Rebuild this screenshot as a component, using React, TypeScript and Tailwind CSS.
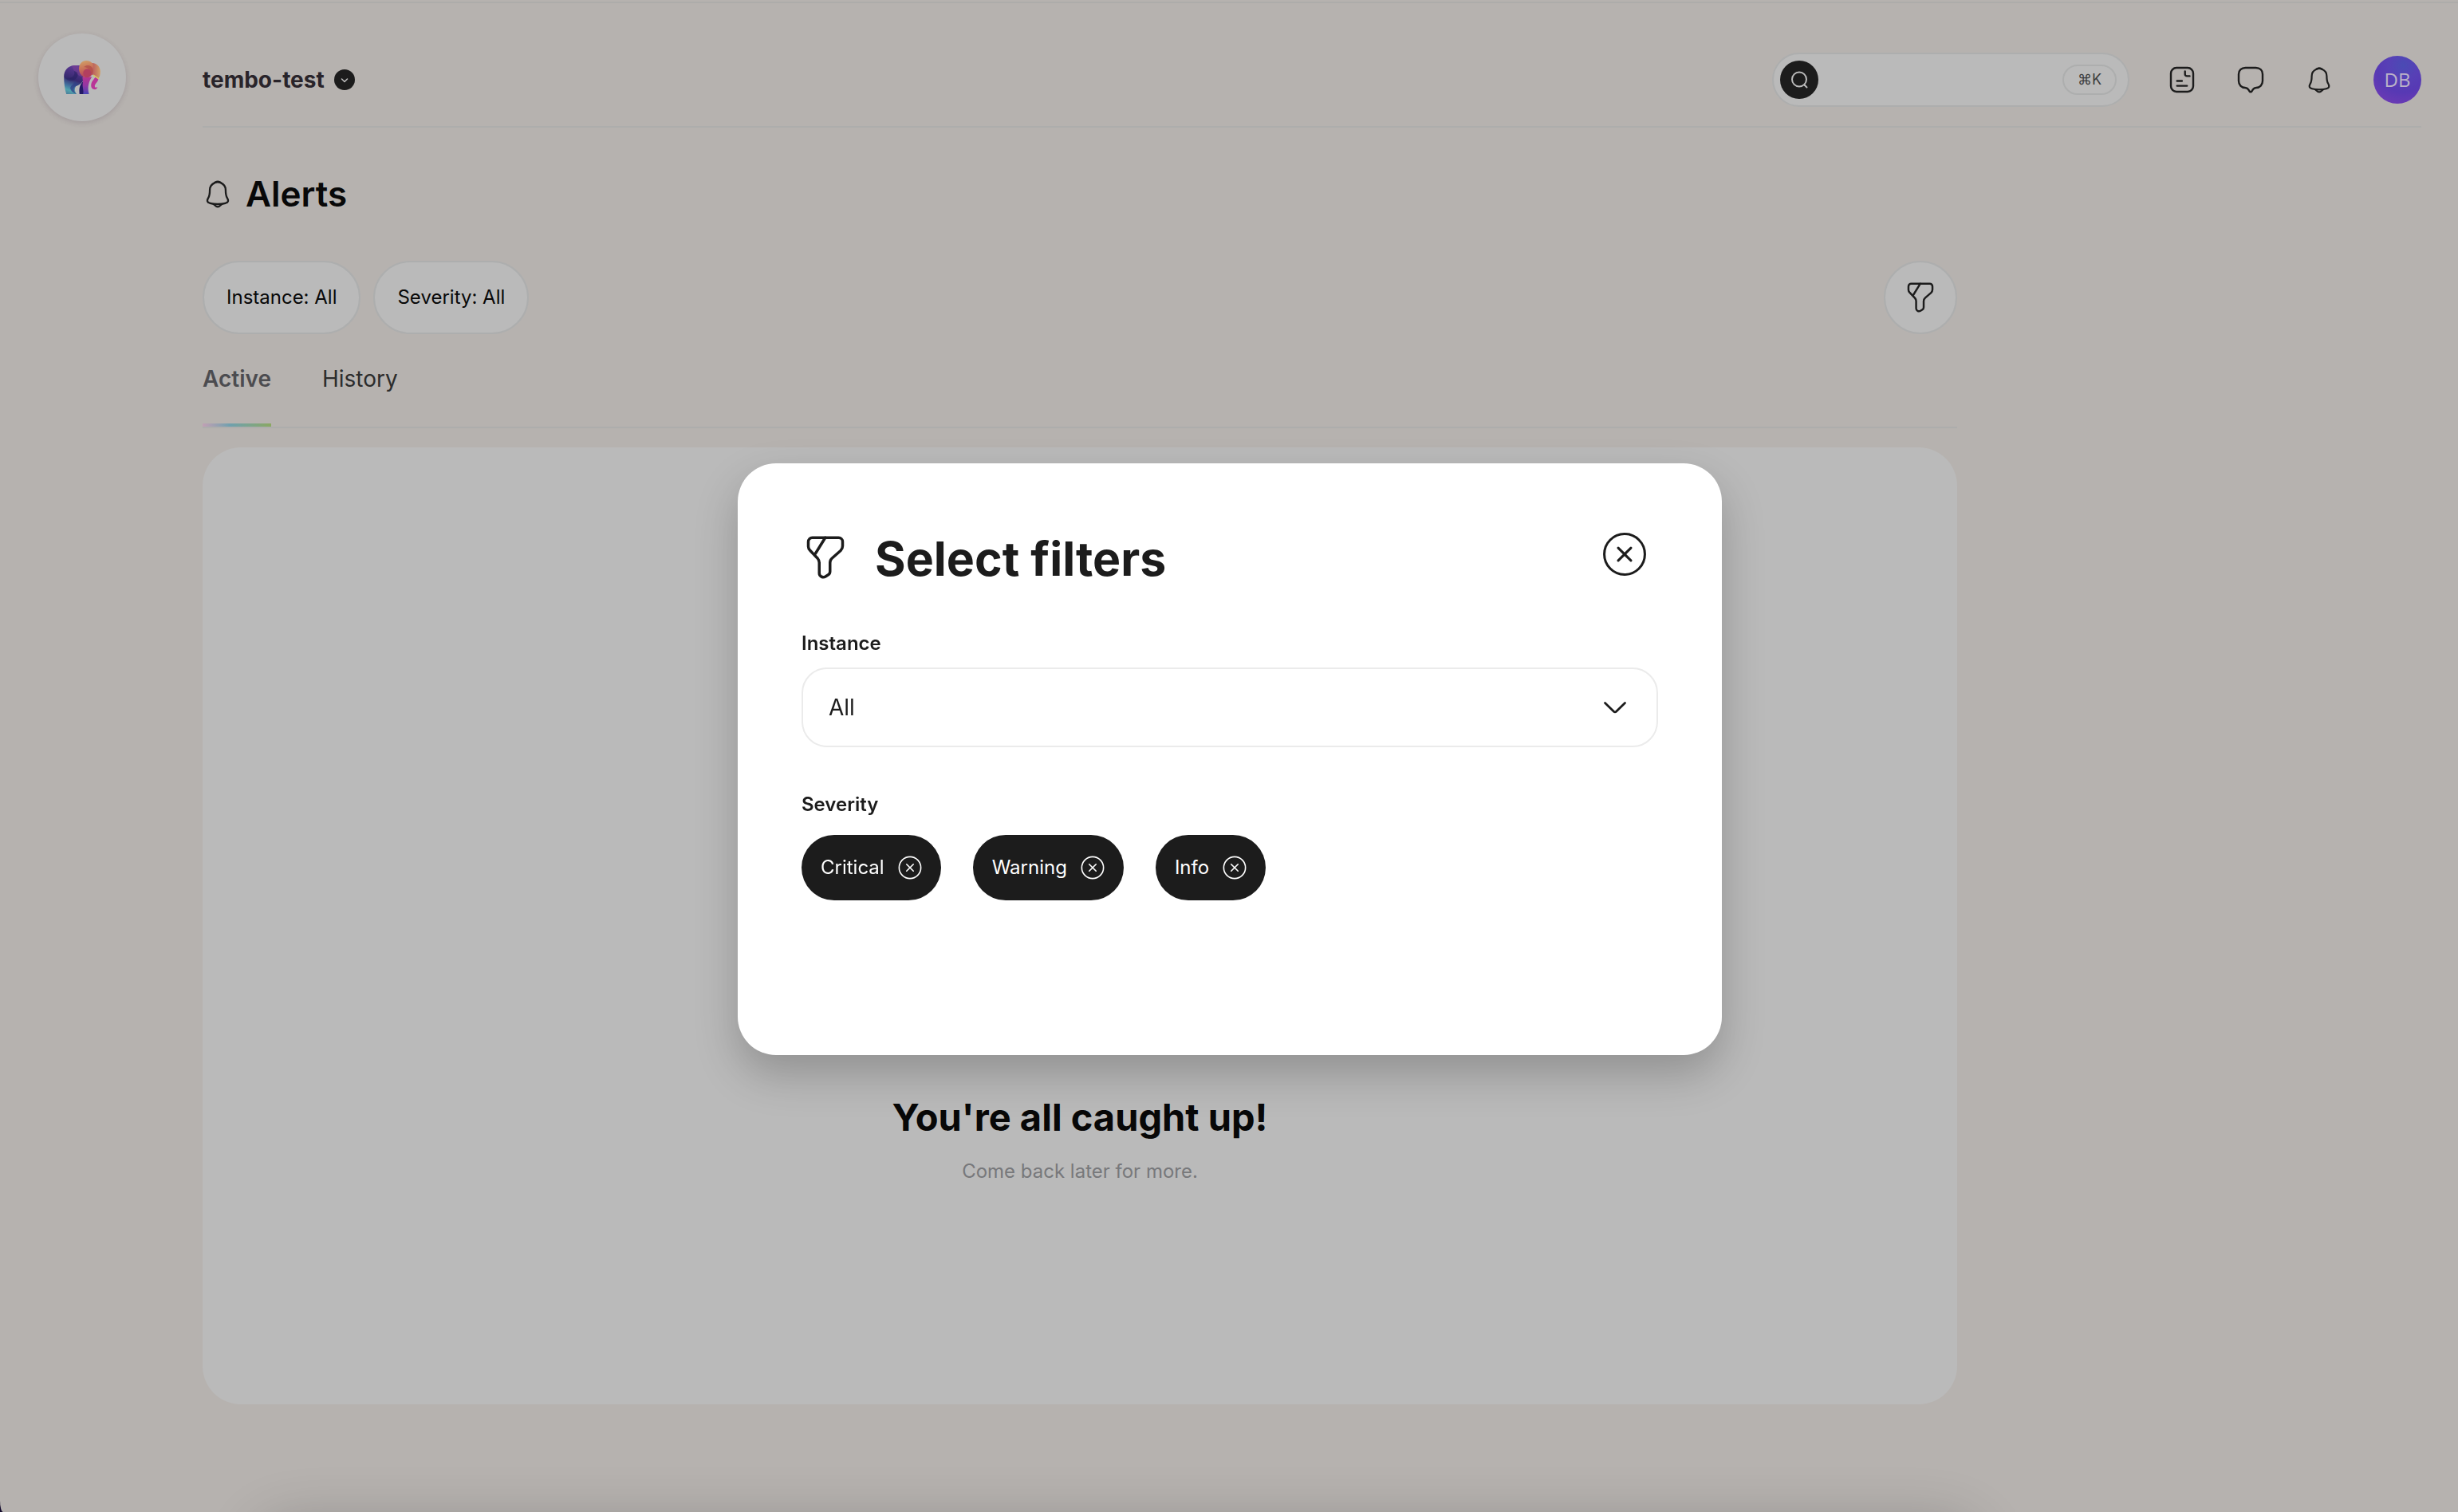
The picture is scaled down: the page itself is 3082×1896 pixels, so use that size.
import React from "react";

type IconProps = { className?: string };

function BellIcon({ className }: IconProps) {
  return (
    <svg viewBox="0 0 32 36" fill="none" stroke="currentColor" strokeWidth="2.2" strokeLinejoin="round" strokeLinecap="round" className={className} aria-hidden="true">
      <path d="M16 3.4c1.6 0 2.4.8 3.4 1.4 3.400 1.500 6 4.600 6 8.600 0 4.300.1 6.600 1.800 9.400.8 1.300 1.400 2.400 1 4.100-.3 1.300-1.600 1.800-3.200 2.300-3 .9-6 1.100-9 1.100s-6-.2-9-1.100c-1.600-.5-2.900-1-3.200-2.300-.4-1.700.2-2.800 1-4.100 1.700-2.800 1.800-5.100 1.800-9.400 0-4 2.600-7.100 6-8.600 1-.6 1.800-1.400 3.400-1.400z" />
      <path d="M12.600 4.600C14.600 3.900 17.400 3.900 19.400 4.600" />
      <path d="M11 30.200c1.600 1.500 2.900 3.300 5 3.300s3.400-1.800 5-3.300" />
    </svg>
  );
}

function NoteIcon({ className }: IconProps) {
  return (
    <svg viewBox="0 0 36 36" fill="none" stroke="currentColor" strokeWidth="2.4" strokeLinecap="round" strokeLinejoin="round" className={className} aria-hidden="true">
      <rect x="4" y="3" width="28" height="30" rx="7" />
      <path d="M21.700 7.500v3.500c0 1.500.9 2.400 2.400 2.400h3.400" />
      <path d="M11.700 19.500h6.200M11.700 25.600h12.500" />
    </svg>
  );
}

function ChatIcon({ className }: IconProps) {
  return (
    <svg viewBox="0 0 36 36" fill="none" stroke="currentColor" strokeWidth="2.4" strokeLinejoin="round" className={className} aria-hidden="true">
      <path d="M11.500 3h13c5 0 8.500 3.200 8.500 8v8.500c0 5-3.500 8.300-8 8.500-2.400.1-3 .7-4.200 2.300l-1.300 2c-.8 1.300-2.200 1.300-3 0l-1.300-2C14 28.700 13.400 28.100 11 28c-4.500-.2-8-3.500-8-8.500V11c0-4.800 3.500-8 8.500-8z" />
    </svg>
  );
}

function FunnelIcon({ className }: IconProps) {
  return (
    <svg viewBox="0 0 24 24" fill="none" stroke="currentColor" strokeWidth="1.4" strokeLinecap="round" strokeLinejoin="round" className={className} aria-hidden="true">
      <path d="M5.400 2.100h13.200c1.100 0 2 .9 2 2v2.200c0 .8-.5 1.800-1 2.300l-4.300 3.800c-.6.500-1 1.500-1 2.300v4.300c0 .6-.4 1.400-.9 1.700l-1.400.9c-1.300.8-3.100-.1-3.100-1.700v-5.300c0-.7-.4-1.600-.8-2.100L4.300 8.500c-.5-.5-.9-1.400-.9-2V4.200c0-1.200.9-2.100 2-2.100z" />
      <path d="M11.900 2.100 7 10" />
    </svg>
  );
}

function CircleXIcon({ className }: IconProps) {
  return (
    <svg viewBox="0 0 24 24" fill="none" stroke="currentColor" strokeWidth="1.300" strokeLinecap="round" className={className} aria-hidden="true">
      <circle cx="12" cy="12" r="10.900" />
      <path d="m8.600 8.600 6.800 6.800M15.400 8.600l-6.800 6.800" />
    </svg>
  );
}

function ElephantLogo({ className }: IconProps) {
  return (
    <svg viewBox="0 0 138 127" className={className} aria-hidden="true">
      <defs>
        <linearGradient id="body" x1="0.400" y1="0" x2="0.150" y2="1">
          <stop offset="0" stopColor="#5d3a94" />
          <stop offset="0.450" stopColor="#36296f" />
          <stop offset="0.700" stopColor="#44739f" />
          <stop offset="0.850" stopColor="#52a3ae" />
          <stop offset="1" stopColor="#4a7f9a" />
        </linearGradient>
        <linearGradient id="leg" x1="0" y1="0" x2="0" y2="1">
          <stop offset="0" stopColor="#b5348f" />
          <stop offset="0.500" stopColor="#9336a4" />
          <stop offset="1" stopColor="#4645b4" />
        </linearGradient>
        <linearGradient id="ear" x1="0" y1="0" x2="0.200" y2="1">
          <stop offset="0" stopColor="#d2a568" />
          <stop offset="0.500" stopColor="#c97458" />
          <stop offset="1" stopColor="#b4405f" />
        </linearGradient>
        <linearGradient id="face" x1="0" y1="0" x2="1" y2="0">
          <stop offset="0" stopColor="#b3475c" />
          <stop offset="1" stopColor="#d0a066" />
        </linearGradient>
      </defs>
      <path d="M62 18H38C14 20 0 38 0 60c0 26 3 48 9 67h39c-8-10-9-22-2-30 12-6 22-10 30-26z" fill="url(#body)" />
      <path d="M30 20c16-4 30-2 34 16 2 10 4 20 6 26-18-4-34-20-40-42z" fill="#7a3f95" opacity="0.600" />
      <path d="M2 62c10 20 40 20 50-4 2-10-4-18-14-18 8 14-8 34-36 22z" fill="#282263" opacity="0.600" />
      <path d="M24 104c2-12 16-14 18-28 4 14 14 14 22 10-12 10-22 8-26 18-2 6 2 16 10 23-12-4-22-12-24-23z" fill="#2f3d86" opacity="0.700" />
      <path d="M74 78c-14 12-18 28-15 49h17z" fill="#231a66" />
      <path d="M70 62h36c-12 18-18 38-11 65H73c3-16-5-28-1-46z" fill="url(#leg)" />
      <path d="M106 9c22 0 32 18 32 32 0 12-2 20-8 28L114 56 98 50z" fill="url(#face)" />
      <path d="M131 68c-1 14-16 20-14 30 1 5 6 5 10 2-1 8-7 10-13 9-14-2-14-22-4-34 4-6 8-10 9-14z" fill="#b93597" />
      <path d="m112 52 22 16-3 3-20-13z" fill="#d2cc62" />
      <path d="M57 30C57 12 70 0 84 0c12 0 22 6 26 14 4 16 2 50-24 50-18 0-29-16-29-34z" fill="url(#ear)" />
      <path d="M76 24c14-12 34-4 34 14 0 8-6 16-14 20 8-14 2-32-20-34z" fill="#b2504a" opacity="0.800" />
      <circle cx="88" cy="47" r="15" fill="#b23f5f" />
    </svg>
  );
}

function Header() {
  return (
    <header className="flex items-center justify-between border-b-2 border-[#adadac] pt-[62px] pb-6">
      <button className="flex items-center gap-3 text-[28px] leading-10 font-bold text-[#29242a]">
        tembo-test
        <span className="grid size-[26px] place-items-center rounded-full bg-[#1c1c1c] text-[#bababa]">
          <svg viewBox="0 0 26 26" fill="none" stroke="currentColor" strokeWidth="1.600" strokeLinecap="round" strokeLinejoin="round" className="size-full" aria-hidden="true">
            <path d="m9.500 12 3.500 3.500 3.500-3.500" />
          </svg>
        </span>
      </button>
      <div className="flex items-center">
        <label className="flex h-[68px] w-[448px] items-center rounded-full border-2 border-[#adaeae] bg-[#bababa] pr-3.5 pl-2">
          <span className="grid size-12 shrink-0 place-items-center rounded-full bg-[#1c1c1c] text-[#bababa]">
            <svg viewBox="0 0 24 24" fill="none" stroke="currentColor" strokeWidth="2" strokeLinecap="round" className="size-6" aria-hidden="true">
              <circle cx="12" cy="11.500" r="9" />
              <path d="m18.500 18.500 3 3" />
            </svg>
          </span>
          <input aria-label="Search" className="h-12 min-w-0 flex-1 bg-transparent px-4 text-2xl outline-none" />
          <kbd className="grid h-[38px] w-[68px] shrink-0 place-items-center rounded-full border-2 border-[#adaeae] font-['Inter',sans-serif] text-lg leading-none text-[#3c3c3c]">
            ⌘K
          </kbd>
        </label>
        <nav className="ml-12 flex items-center gap-[50px] text-[#1c1c1c]">
          <button aria-label="Documentation"><NoteIcon className="size-9" /></button>
          <button aria-label="Messages"><ChatIcon className="size-9" /></button>
          <button aria-label="Notifications"><BellIcon className="size-9" /></button>
          <button className="grid size-[60px] place-items-center rounded-full bg-[radial-gradient(circle_at_62%_20%,#4a4bb4_0%,#5740b6_30%,#5739b4_55%,#763bb4_100%)] font-['Open_Sans',sans-serif] text-2xl font-medium text-[#bbb3c8]">
            DB
          </button>
        </nav>
      </div>
    </header>
  );
}

function FilterPill({ children }: { children: React.ReactNode }) {
  return (
    <button className="h-[92px] rounded-full border-2 border-[#adaeae] bg-[#bababa] px-7 text-2xl text-[#080808]">{children}</button>
  );
}

function SeverityChip({ label }: { label: string }) {
  return (
    <button className="flex h-[82px] items-center gap-[17px] rounded-full bg-[#1c1c1c] px-6 text-2xl text-white">
      {label}
      <CircleXIcon className="size-[30px]" />
    </button>
  );
}

function FilterDialog() {
  return (
    <div className="fixed inset-0 flex items-center justify-center pt-2 pl-0.5">
      <section
        role="dialog"
        aria-modal="true"
        aria-labelledby="dialog-title"
        className="min-h-[742px] w-full max-w-[1234px] rounded-[48px] bg-white px-20 pt-[82px] pb-20 text-[#1c1c1c] shadow-[0_24px_54px_rgba(0,0,0,0.22)]"
      >
        <div className="flex h-[72px] items-center">
          <FunnelIcon className="size-[60px]" />
          <h2 id="dialog-title" className="ml-8 flex-1 pt-1 text-[59px] leading-[72px] font-bold">Select filters</h2>
          <button aria-label="Close" className="mr-3.5 mb-2">
            <CircleXIcon className="size-14" />
          </button>
        </div>
        <label htmlFor="instance" className="mt-14 block text-2xl leading-8 font-semibold">Instance</label>
        <div className="relative mt-3.5">
          <select id="instance" className="h-[100px] w-full appearance-none rounded-[32px] border-2 border-[#ebebeb] bg-white px-8 text-[28px] outline-none">
            <option>All</option>
          </select>
          <svg viewBox="0 0 32 32" fill="none" stroke="currentColor" strokeWidth="2.800" strokeLinecap="round" strokeLinejoin="round" className="pointer-events-none absolute top-1/2 right-[38px] size-8 -translate-y-1/2" aria-hidden="true">
            <path d="m3.500 10.500 11 10.700c1 1 2 1 3 0l11-10.700" />
          </svg>
        </div>
        <h3 className="mt-14 text-2xl leading-8 font-semibold">Severity</h3>
        <div className="mt-[22px] flex gap-10">
          <SeverityChip label="Critical" />
          <SeverityChip label="Warning" />
          <SeverityChip label="Info" />
        </div>
      </section>
    </div>
  );
}

export default function App() {
  return (
    <div className="min-h-screen bg-[#130a2c] font-['Inter',sans-serif]">
      <div className="relative min-h-screen overflow-hidden rounded-bl-[4px_14px] bg-[#b6b2af] pt-0.5">
        <div className="flex border-t-2 border-[#adacaa]">
          <aside className="w-[254px] shrink-0 pt-[38px] pl-12">
            <a href="#" aria-label="Home" className="grid size-[110px] place-items-center rounded-full bg-[#bababa] shadow-[0_2px_6px_rgba(60,40,60,0.16)]">
              <ElephantLogo className="h-[42px] w-[46px]" />
            </a>
          </aside>
          <div className="min-w-0 flex-1 pr-[46px]">
            <Header />
            <main className="max-w-[2200px] pt-[55px]">
              <div className="flex items-center gap-4">
                <BellIcon className="size-[38px] text-[#1c1c1c]" />
                <h1 className="text-[44px] leading-[56px] font-semibold text-[#080808]">Alerts</h1>
              </div>
              <div className="mt-14 flex gap-4">
                <FilterPill>Instance: All</FilterPill>
                <FilterPill>Severity: All</FilterPill>
                <button aria-label="Open filters" className="ml-auto grid size-[92px] place-items-center rounded-full border-2 border-[#adaeae] bg-[#bababa] text-[#1c1c1c]">
                  <FunnelIcon className="size-[42px]" />
                </button>
              </div>
              <div role="tablist" className="flex gap-16 border-b-2 border-[#adadac] pt-9 text-[28px] leading-10">
                <button role="tab" aria-selected="true" className="font-semibold text-[#4c4c50]">
                  Active
                  <span className="mt-9 block h-1 bg-linear-to-r from-[#c0a0b4] via-[#6fa0ae] via-40% to-[#8aa861]" />
                </button>
                <button role="tab" aria-selected="false" className="self-start text-[#2c2c2c]">History</button>
              </div>
              <div className="mt-6 flex min-h-[1200px] flex-col items-center justify-end gap-6 rounded-[48px] bg-[#bababa] pb-[276px]">
                <h2 className="text-[47px] leading-[56px] font-bold text-[#080808]">You're all caught up!</h2>
                <p className="text-2xl leading-8 text-[#77787b]">Come back later for more.</p>
              </div>
            </main>
          </div>
        </div>
        <div className="absolute top-full right-[600px] left-[320px] mt-3 h-40 rounded-[48px] shadow-[0_0_70px_rgba(0,0,0,0.2)]" />
      </div>
      <FilterDialog />
    </div>
  );
}
